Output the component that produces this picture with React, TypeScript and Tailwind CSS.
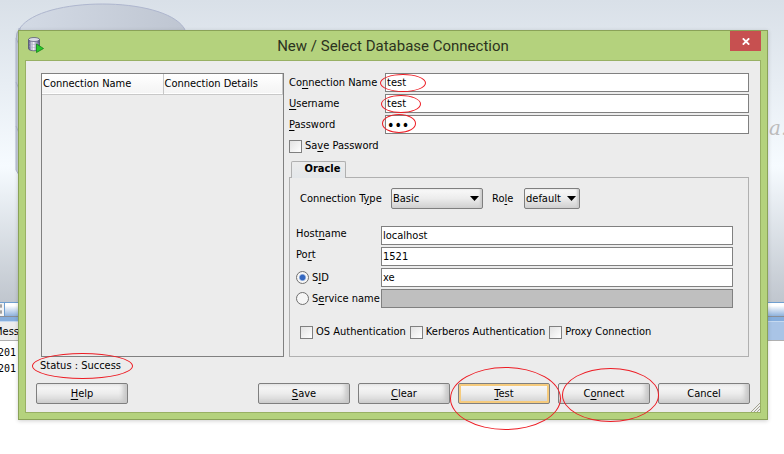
import { useState } from 'react';
import type { ReactNode } from 'react';

function Key({ children }: { children: ReactNode }) {
  return <span className="underline underline-offset-2">{children}</span>;
}

function Ring({ className }: { className: string }) {
  return (
    <span
      aria-hidden="true"
      className={'pointer-events-none absolute z-10 rounded-[50%] border border-[#ed1c24] ' + className}
    />
  );
}

const field =
  'block h-[19px] w-full min-w-0 border border-[#808080] bg-white px-px leading-4 text-black outline-none disabled:bg-[#bfbfbf]';
const metal =
  'rounded-[2px] border border-[#7f7f7f] bg-linear-to-b from-[#fafafa] via-[#ececec] to-[#d0d0d0]';
const box =
  'size-[13px] shrink-0 appearance-none border border-[#808080] bg-linear-to-br from-[#e2e2e2] to-white checked:bg-[#3a6fc4]';
const radio =
  'size-[13px] shrink-0 appearance-none rounded-full border border-[#707070] bg-[#f6f6f6] checked:bg-radial checked:from-[#3568c0] checked:from-30% checked:to-[#f6f6f6] checked:to-50%';

function Check({ children }: { children: ReactNode }) {
  return (
    <label className="flex items-center gap-[3px] whitespace-nowrap">
      <input type="checkbox" className={box} />
      <span>{children}</span>
    </label>
  );
}

function Drop({ id, options, className }: { id: string; options: string[]; className: string }) {
  return (
    <span className={'relative block h-[21px] ' + className}>
      <select id={id} className={metal + ' block h-full w-full appearance-none pl-px text-[11px] leading-4 text-black shadow-[inset_-2px_0_2px_#cccccc]'}>
        {options.map((o) => (
          <option key={o}>{o}</option>
        ))}
      </select>
      <svg viewBox="0 0 9 5" className="pointer-events-none absolute top-2 right-1 h-[5px] w-[9px]">
        <path d="M0 0h9L4.500 5z" fill="#000" />
      </svg>
    </span>
  );
}

function Push({ children, focus }: { children: ReactNode; focus?: boolean }) {
  return (
    <button
      type="button"
      className={
        metal +
        ' h-[21px] w-full text-center leading-4 ' +
        (focus ? 'shadow-[inset_0_0_0_2px_#f6cb7d,inset_0_-2px_0_#f0a83a]' : 'shadow-[inset_-4px_0_4px_#c8c8c8]')
      }
    >
      {children}
    </button>
  );
}

function Backdrop() {
  return (
    <div aria-hidden="true" className="absolute inset-0 -z-10 overflow-hidden bg-white">
      <div className="relative h-[302px] overflow-hidden bg-linear-to-b from-[#d9e0e8] via-[#f6fbff] via-55% to-[#c0c6ce]">
        <svg viewBox="0 0 200 302" className="absolute top-0 left-0 h-[302px] w-[200px]">
          <defs>
            <linearGradient id="lid" x1="0" x2="1" y1="0" y2="0">
              <stop offset="0" stopColor="#d3dae5" />
              <stop offset="1" stopColor="#bec5d1" />
            </linearGradient>
          </defs>
          <path d="M20 28C42 -4 163 -4 184 28L190 40V60H20z" fill="url(#lid)" stroke="#aeb6ce" />
          <path d="M20 28Q16 32 16 40V170L19 175V28" fill="#cdd3e0" stroke="#aeb6ce" />
          <path d="M16 38l3 7M16 82l3 7M16 126l3 7" stroke="#aeb6ce" />
        </svg>
        <span className="absolute top-[116px] left-[769px] font-['DejaVu_Serif',serif] text-[20px] leading-6 text-[#bdbdbd] italic">
          a.
        </span>
      </div>
      <div className="flex h-[15px] border-t border-b border-t-[#6f9fd0] border-b-[#8a8f98] bg-linear-to-b from-white from-20% to-[#8fb2dc]">
        <div className="w-[5px] border-r border-[#6f9fd0] bg-[#f4f4f4]">
          <svg viewBox="0 0 4 12" className="h-3 w-1">
            <path d="M0 3h2M0 9h2M1 1v4M1 7v4" stroke="#888" />
          </svg>
        </div>
      </div>
      <div className="h-1 bg-[#86aedd]" />
      <div className="flex h-5 border-t border-b border-t-[#c5d9f0] border-b-[#b0b0b0] bg-[#a9c4e6]">
        <div className="w-[18px] bg-[#ececec]">
          <span className="-ml-1.5 block text-[11px] leading-5">Mess</span>
        </div>
      </div>
      <div className="pt-1 font-['DejaVu_Sans_Mono',monospace] text-[10px] leading-4">
        <span className="-ml-0.5 block">201</span>
        <span className="-ml-0.5 block">201</span>
      </div>
    </div>
  );
}

export default function App() {
  const [mode, setMode] = useState('sid');
  return (
    <div className="relative isolate min-h-screen overflow-hidden pt-[30px] pr-4 pb-8 pl-[18px] font-['DejaVu_Sans_Condensed','Noto_Sans',sans-serif] text-[11px] leading-4 text-black">
      <Backdrop />
      <main className="border border-[#8aa258] bg-[#b4d27d] px-1.5 pb-1.5 shadow-[0_1px_4px_#00000030]">
        <header className="relative flex h-[29px] items-center justify-center">
          <svg viewBox="0 0 16 16" className="absolute top-1.5 left-[3px] size-4">
            <defs>
              <linearGradient id="drum" x1="0" x2="1" y1="0" y2="0">
                <stop offset="0" stopColor="#4f4c80" />
                <stop offset="0.400" stopColor="#fff" />
                <stop offset="1" stopColor="#4a4b78" />
              </linearGradient>
            </defs>
            <path d="M.5 2.500v9c0 3 11 3 11 0v-9z" fill="url(#drum)" stroke="#4d4c72" strokeWidth=".7" />
            <path d="M1 6c2 2 9 2 10 0M1 9c2 2 9 2 10 0M4.500 5v8M8 5v8" fill="none" stroke="#a2a2be" strokeWidth=".5" />
            <ellipse cx="6" cy="2.500" rx="5.500" ry="2" fill="#d9dbe7" stroke="#4d4c72" strokeWidth=".7" />
            <path d="M8.500 7v8.500l7-4z" fill="#27c92c" stroke="#138516" strokeWidth=".8" />
          </svg>
          <h1 className="font-['Roboto',sans-serif] text-[15px] text-[#2c3320]">New / Select Database Connection</h1>
          <button type="button" aria-label="Close" className="absolute top-0 right-0 flex h-5 w-[31px] items-center justify-center bg-[#c75050]">
            <svg viewBox="0 0 8 7" className="h-[7px] w-2">
              <path d="M.8.300 7.200 6.700M7.200.300.800 6.700" stroke="#fff" strokeWidth="1.800" />
            </svg>
          </button>
        </header>
        <form className="relative border border-[#98b064] bg-[#ececec] px-2.5 pt-3 pb-2" onSubmit={(e) => e.preventDefault()}>
          <div className="flex gap-[5px] pr-px pl-[5px]">
            <div className="w-[243px] shrink-0 border border-[#808080]">
              <table className="w-full table-fixed border-collapse">
                <thead>
                  <tr className="h-5 border-b border-[#c8c8c8] bg-linear-to-b from-white to-[#f4f4f4] text-left">
                    <th className="w-[121px] border-r border-[#c8c8c8] px-px font-normal">Connection Name</th>
                    <th className="border-r border-[#c8c8c8] px-px font-normal">Connection Details</th>
                  </tr>
                </thead>
              </table>
            </div>
            <div className="min-w-0 flex-1">
              <div className="grid grid-cols-[96px_1fr] gap-y-0.5 leading-[19px]">
                <label htmlFor="name">Co<Key>n</Key>nection Name</label>
                <div className="relative">
                  <input id="name" className={field} defaultValue="test" />
                  <Ring className="top-px -left-[5px] h-[18px] w-[46px]" />
                </div>
                <label htmlFor="user"><Key>U</Key>sername</label>
                <div className="relative">
                  <input id="user" className={field} defaultValue="test" />
                  <Ring className="top-px -left-1 h-[18px] w-10" />
                </div>
                <label htmlFor="pass"><Key>P</Key>assword</label>
                <div className="relative">
                  <input id="pass" type="password" className={field + ' text-[14px]'} defaultValue="abc" />
                  <Ring className="-top-px -left-[3px] h-[19px] w-[34px]" />
                </div>
              </div>
              <div className="pt-1">
                <Check>Sa<Key>v</Key>e Password</Check>
              </div>
              <div role="tablist" className="relative z-10 -mb-px pt-[7px] pl-0.5">
                <button type="button" role="tab" aria-selected="true" className="block h-[17px] w-[55px] rounded-t-[2px] border border-b-0 border-[#b0b0b0] bg-linear-to-b from-[#ececec] to-[#e4e7ea] pb-0.5 pl-2 leading-3 font-bold">
                  Oracle
                </button>
              </div>
              <div role="tabpanel" className="border border-[#b0b0b0] pt-2.5 pr-[15px] pb-4 pl-1.5">
                <div className="flex items-center pb-[17px] pl-1">
                  <label htmlFor="type" className="w-[91px]">Connection T<Key>y</Key>pe</label>
                  <Drop id="type" options={['Basic', 'TNS', 'LDAP']} className="w-[92px]" />
                  <label htmlFor="role" className="w-[41px] pl-[9px]">Ro<Key>l</Key>e</label>
                  <Drop id="role" options={['default', 'SYSDBA']} className="w-[56px]" />
                </div>
                <div className="grid grid-cols-[85px_1fr] gap-y-0.5">
                  <label htmlFor="host">Host<Key>n</Key>ame</label>
                  <input id="host" className={field} defaultValue="localhost" />
                  <label htmlFor="port">Po<Key>r</Key>t</label>
                  <input id="port" className={field} defaultValue="1521" />
                  <label className="flex items-center gap-[3px]">
                    <input type="radio" name="mode" className={radio} checked={mode === 'sid'} onChange={() => setMode('sid')} />
                    <span>S<Key>I</Key>D</span>
                  </label>
                  <input aria-label="SID" className={field} defaultValue="xe" disabled={mode !== 'sid'} />
                  <label className="flex items-center gap-[3px] whitespace-nowrap">
                    <input type="radio" name="mode" className={radio} checked={mode === 'service'} onChange={() => setMode('service')} />
                    <span>S<Key>e</Key>rvice name</span>
                  </label>
                  <input aria-label="Service name" className={field} disabled={mode !== 'service'} />
                </div>
                <div className="flex gap-1 pt-4 pl-1">
                  <Check>OS Authentication</Check>
                  <Check>Kerberos Authentication</Check>
                  <Check>Proxy Connection</Check>
                </div>
              </div>
            </div>
          </div>
          <div className="flex pl-1">
            <p className="relative py-px">
              Status : Success
              <Ring className="-top-1 -left-2 h-[26px] w-[101px]" />
            </p>
          </div>
          <div className="flex gap-2 pt-2">
            <div className="mr-auto w-[92px]"><Push><Key>H</Key>elp</Push></div>
            <div className="w-[92px]"><Push><Key>S</Key>ave</Push></div>
            <div className="w-[92px]"><Push><Key>C</Key>lear</Push></div>
            <div className="relative w-[92px]">
              <Push focus><Key>T</Key>est</Push>
              <Ring className="-top-4 -left-2 h-[63px] w-[111px]" />
            </div>
            <div className="relative w-[92px]">
              <Push>C<Key>o</Key>nnect</Push>
              <Ring className="-top-[15px] left-1 h-[54px] w-[97px]" />
            </div>
            <div className="w-[92px]"><Push>Cancel</Push></div>
          </div>
          <svg viewBox="0 0 9 9" className="absolute right-0 bottom-0 size-[9px]">
            <path d="M0 9 9 0M3 9l6-6M6 9l3-3" stroke="#a3a38f" />
          </svg>
        </form>
      </main>
    </div>
  );
}
